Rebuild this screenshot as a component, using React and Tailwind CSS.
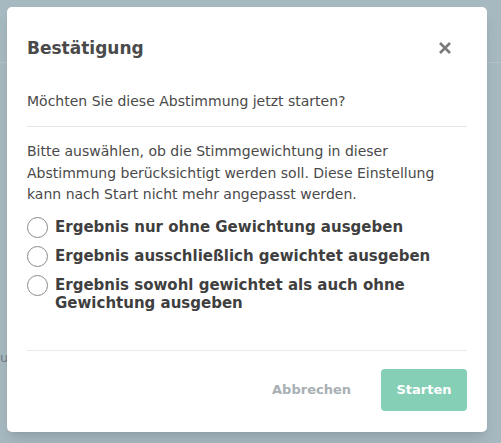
import { useState } from 'react';

const options = [
  'Ergebnis nur ohne Gewichtung ausgeben',
  'Ergebnis ausschließlich gewichtet ausgeben',
  'Ergebnis sowohl gewichtet als auch ohne Gewichtung ausgeben',
];

export default function App() {
  const [choice, setChoice] = useState(null);

  return (
    <div
      className="relative h-[443px] w-[501px] overflow-hidden bg-[#a6b8c0] pt-[7px] pl-[7px]"
      style={{ fontFamily: '"DejaVu Sans", "Liberation Sans", sans-serif' }}
    >
      {/* background page hints */}
      <div className="absolute left-0 right-0 top-[62px] h-px bg-[#b3c3ca]" />
      <div className="absolute left-0 top-[348px] text-[13px] text-[#6d7d84]">ur</div>

      <div className="relative w-[480px] h-[425px] rounded-[5px] bg-white shadow-lg flex flex-col px-5">
        {/* Header */}
        <div className="flex items-center justify-between pt-[29px] pb-[31px]">
          <h3 className="text-[17px] font-semibold text-[#4a4a4a] leading-6">Bestätigung</h3>
          <button className="mr-[15px] text-[#7a7a7a]">
            <svg width="14" height="14" viewBox="0 0 14 14">
              <path d="M2 2 L12 12 M12 2 L2 12" stroke="currentColor" strokeWidth="2.6" strokeLinecap="butt" />
            </svg>
          </button>
        </div>

        <p className="text-[14px] text-[#4a4a4a] leading-5 pb-[15px] border-b border-[#e6e6e6]">
          Möchten Sie diese Abstimmung jetzt starten?
        </p>

        <p className="mt-[14px] text-[14px] text-[#4a4a4a] leading-[21.5px]">
          Bitte auswählen, ob die Stimmgewichtung in dieser Abstimmung berücksichtigt werden soll. Diese Einstellung kann nach Start nicht mehr angepasst werden.
        </p>

        <div className="mt-[12px] flex flex-col gap-[9px]">
          {options.map((o, i) => (
            <label key={i} className="flex items-start gap-[7px] cursor-pointer">
              <span
                onClick={() => setChoice(i)}
                className="-mt-[1px] w-[21px] h-[21px] shrink-0 rounded-full border border-[#8a8a8a] bg-white flex items-center justify-center"
              >
                {choice === i && <span className="w-[11px] h-[11px] rounded-full bg-[#86cfb7]" />}
              </span>
              <span className="text-[15px] font-semibold text-[#3f3f3f] leading-[18px]">{o}</span>
            </label>
          ))}
        </div>

        <div className="mt-auto border-t border-[#eaeaea] flex items-center justify-end gap-[30px] pt-[18px] pb-[21px]">
          <button className="text-[13px] font-semibold text-[#a9b0b4]">Abbrechen</button>
          <button className="w-[86px] h-[42px] rounded-[4px] bg-[#86cfb7] text-[13px] font-semibold text-white">
            Starten
          </button>
        </div>
      </div>
    </div>
  );
}
